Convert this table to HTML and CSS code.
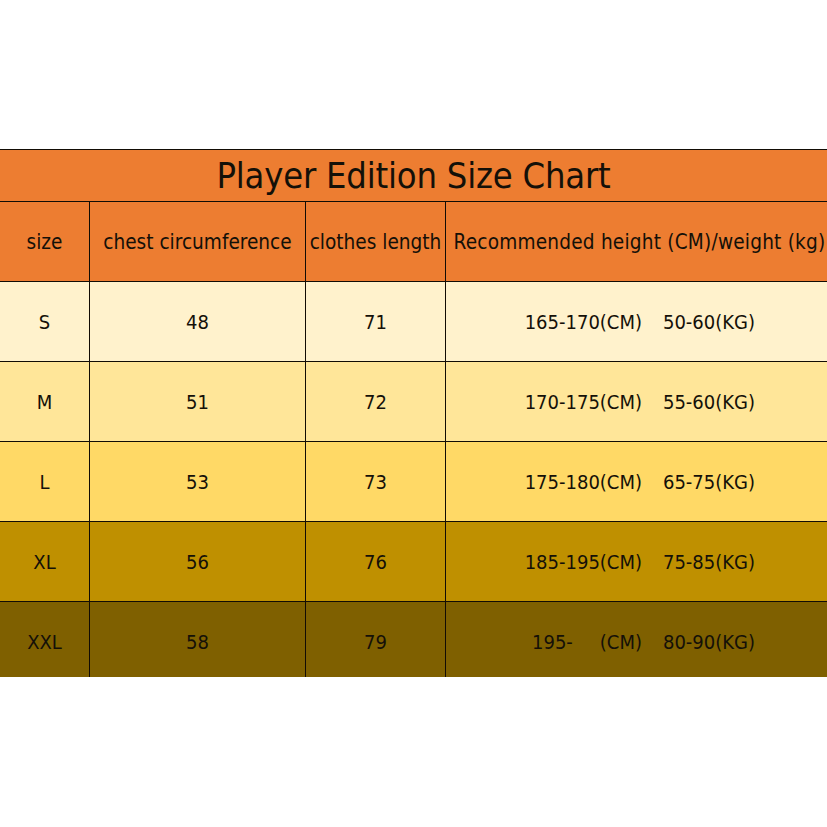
FILE: index.html
```html
<!DOCTYPE html>
<html>
<head>
<meta charset="utf-8">
<link rel="stylesheet" href="styles.css">
</head>
<body>
<div class="chart">
  <div class="title">Player Edition Size Chart</div>
  <div class="grid">
    <div class="cell head">size</div>
    <div class="cell head">chest circumference</div>
    <div class="cell head">clothes length</div>
    <div class="cell head last wide">Recommended height (CM)/weight (kg)</div>

    <div class="cell r-s">S</div>
    <div class="cell r-s">48</div>
    <div class="cell r-s">71</div>
    <div class="cell r-s last"><span class="hw">165-170(CM)</span><span class="wt">50-60(KG)</span></div>

    <div class="cell r-m">M</div>
    <div class="cell r-m">51</div>
    <div class="cell r-m">72</div>
    <div class="cell r-m last"><span class="hw">170-175(CM)</span><span class="wt">55-60(KG)</span></div>

    <div class="cell r-l">L</div>
    <div class="cell r-l">53</div>
    <div class="cell r-l">73</div>
    <div class="cell r-l last"><span class="hw">175-180(CM)</span><span class="wt">65-75(KG)</span></div>

    <div class="cell r-xl">XL</div>
    <div class="cell r-xl">56</div>
    <div class="cell r-xl">76</div>
    <div class="cell r-xl last"><span class="hw">185-195(CM)</span><span class="wt">75-85(KG)</span></div>

    <div class="cell r-xxl">XXL</div>
    <div class="cell r-xxl">58</div>
    <div class="cell r-xxl">79</div>
    <div class="cell r-xxl last"><span class="hw"><span class="gap">195-</span>(CM)</span><span class="wt">80-90(KG)</span></div>
  </div>
</div>
</body>
</html>
```
FILE: styles.css
```css
html, body {
  margin: 0;
  padding: 0;
  background: #ffffff;
}
body {
  font-family: "DejaVu Sans Condensed", "DejaVu Sans", sans-serif;
  color: #141008;
}
.chart {
  margin-top: 149px;
  width: 827px;
  height: 528px;
  overflow: hidden;
  box-sizing: border-box;
  border-top: 1px solid #120c04;
}
.title {
  box-sizing: border-box;
  height: 52px;
  background: #ed7d31;
  border-bottom: 1px solid #120c04;
  display: flex;
  align-items: center;
  justify-content: center;
  font-size: 36px;
  letter-spacing: -0.2px;
}
.grid {
  display: grid;
  grid-template-columns: 90px 216px 140px 381px;
  grid-auto-rows: 80px;
}
.cell {
  box-sizing: border-box;
  border-right: 1px solid #120c04;
  border-bottom: 1px solid #120c04;
  display: flex;
  align-items: center;
  justify-content: center;
  font-size: 20px;
  white-space: nowrap;
}
.cell.last {
  border-right: none;
}
.head {
  background: #ed7d31;
  font-size: 20.6px;
}
.head.wide {
  letter-spacing: 0.2px;
  padding-left: 6px;
}
.r-s { background: #fff2cc; }
.r-m { background: #ffe699; }
.r-l { background: #ffd966; }
.r-xl { background: #bf9000; }
.r-xxl { background: #7f6000; }
.hw {
  display: inline-block;
  width: 118px;
  text-align: right;
  margin-left: 6px;
}
.gap {
  margin-right: 27px;
}
.wt {
  margin-left: 21px;
}
```
